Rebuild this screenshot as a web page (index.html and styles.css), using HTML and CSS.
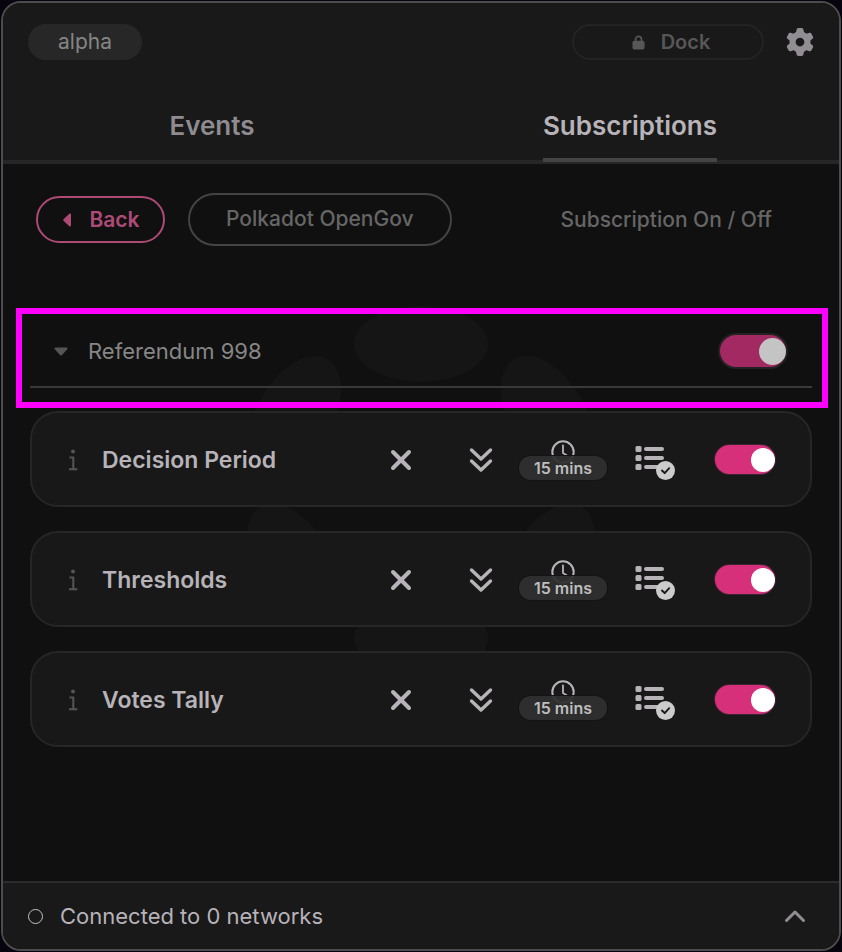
FILE: index.html
```
<!DOCTYPE html>
<html lang="en">
<head>
<meta charset="utf-8">
<title>Subscriptions</title>
<link rel="stylesheet" href="styles.css">
</head>
<body>
<svg class="sprite" aria-hidden="true">
  <symbol id="cross" viewBox="0 0 24 24"><path d="M4 4 20 20M20 4 4 20" fill="none" stroke="currentColor" stroke-width="4" stroke-linecap="round"/></symbol>
  <symbol id="chevrons" viewBox="0 0 24 26"><path d="M2.500 3 12 12 21.500 3M2.500 14 12 23 21.500 14" fill="none" stroke="currentColor" stroke-width="3.400" stroke-linecap="round" stroke-linejoin="round"/></symbol>
  <symbol id="clock" viewBox="0 0 24 24"><path d="M12 5.500V13L16 15.500" fill="none" stroke="currentColor" stroke-width="1.800" stroke-linecap="round"/><circle cx="12" cy="12" r="10.700" fill="none" stroke="currentColor" stroke-width="2"/></symbol>
  <symbol id="list" viewBox="0 -7 40 43"><g fill="currentColor"><rect x="0.500" y="1" width="6" height="6" rx="1.500"/><rect x="0.500" y="10" width="6" height="6" rx="1.500"/><rect x="0.500" y="19" width="6" height="6" rx="1.500"/><rect x="9" y="2" width="20" height="4" rx="2"/><rect x="9" y="11" width="20" height="4" rx="2"/><rect x="9" y="20" width="20" height="4" rx="2"/></g><circle cx="30.500" cy="25.500" r="9.500" fill="#cbcbcb"/><path d="M27 25.500 29.700 28.200 34.200 23.200" fill="none" stroke="#181818" stroke-width="1.900" stroke-linecap="round" stroke-linejoin="round"/></symbol>
  <symbol id="info" viewBox="0 0 10 22"><circle cx="5" cy="2.400" r="2" fill="currentColor"/><path d="M1.500 8.500H5.300V20M1 20.200H9.300" fill="none" stroke="currentColor" stroke-width="2"/></symbol>
</svg>
<div class="panel">
  <header class="header">
    <div class="topbar">
      <span class="tag">alpha</span>
      <div class="actions">
        <button class="dock" type="button"><svg class="lock" viewBox="0 0 14 16"><path d="M3.800 7V4.600a3.200 3.200 0 0 1 6.400 0V7" fill="none" stroke="currentColor" stroke-width="1.800"/><rect x="0.500" y="6" width="13" height="9.500" rx="2" fill="currentColor"/></svg>Dock</button>
        <button class="icon-button" type="button" aria-label="Settings"><svg class="gear" viewBox="0 0 512 512"><path fill="currentColor" d="M495.900 166.600c3.200 8.700 .5 18.400-6.400 24.600l-43.300 39.400c1.100 8.300 1.700 16.800 1.700 25.400s-.6 17.100-1.700 25.400l43.300 39.400c6.900 6.200 9.600 15.900 6.400 24.600c-4.400 11.900-9.700 23.300-15.800 34.300l-4.700 8.100c-6.600 11-14 21.400-22.100 31.200c-5.900 7.200-15.700 9.600-24.500 6.800l-55.700-17.700c-13.400 10.300-28.200 18.900-44 25.400l-12.500 57.100c-2 9.100-9 16.300-18.200 17.800c-13.800 2.300-28 3.500-42.500 3.500s-28.700-1.200-42.500-3.500c-9.200-1.500-16.200-8.700-18.200-17.800l-12.500-57.100c-15.800-6.500-30.600-15.100-44-25.400L83.100 425.900c-8.800 2.800-18.600 .3-24.500-6.800c-8.100-9.800-15.500-20.200-22.100-31.200l-4.700-8.100c-6.100-11-11.400-22.400-15.800-34.300c-3.200-8.700-.5-18.400 6.400-24.600l43.300-39.400C64.600 273.100 64 264.600 64 256s.6-17.100 1.700-25.400L22.400 191.200c-6.900-6.200-9.600-15.900-6.400-24.600c4.400-11.900 9.700-23.300 15.800-34.300l4.700-8.100c6.600-11 14-21.400 22.100-31.200c5.900-7.200 15.700-9.600 24.500-6.800l55.700 17.700c13.400-10.300 28.200-18.900 44-25.400l12.500-57.100c2-9.100 9-16.300 18.200-17.800C227.300 1.200 241.500 0 256 0s28.700 1.200 42.500 3.500c9.200 1.500 16.200 8.700 18.200 17.800l12.500 57.100c15.800 6.500 30.600 15.100 44 25.400l55.700-17.700c8.800-2.800 18.600-.3 24.500 6.800c8.100 9.800 15.500 20.200 22.100 31.200l4.700 8.100c6.100 11 11.400 22.400 15.800 34.300zM256 336a80 80 0 1 0 0-160 80 80 0 1 0 0 160z"/></svg></button>
      </div>
    </div>
    <nav class="tabs">
      <a class="tab" href="#events">Events</a>
      <a class="tab active" href="#subscriptions" aria-current="page">Subscriptions</a>
    </nav>
  </header>
  <main class="content">
    <svg class="watermark" viewBox="-182 -186 364 372" aria-hidden="true"><g fill="currentColor">
      <ellipse cy="-147" rx="67" ry="38"/><ellipse cy="147" rx="67" ry="38"/>
      <ellipse cx="-127" cy="-74" rx="67" ry="38" transform="rotate(-60 -127 -74)"/>
      <ellipse cx="127" cy="-74" rx="67" ry="38" transform="rotate(60 127 -74)"/>
      <ellipse cx="-127" cy="74" rx="67" ry="38" transform="rotate(60 -127 74)"/>
      <ellipse cx="127" cy="74" rx="67" ry="38" transform="rotate(-60 127 74)"/></g></svg>
    <div class="toolbar">
      <button class="back" type="button"><svg class="caret-left" viewBox="0 0 8 14"><path d="M7 1.500V12.500L1.200 7Z" fill="currentColor" stroke="currentColor" stroke-width="2" stroke-linejoin="round"/></svg>Back</button>
      <span class="category">Polkadot OpenGov</span>
      <span class="legend">Subscription On / Off</span>
    </div>
    <section class="group">
      <div class="group-head">
        <button class="group-toggle" type="button"><svg class="caret-down" viewBox="0 0 14 9"><path d="M1.500 1.500H12.500L7 7.500Z" fill="currentColor" stroke="currentColor" stroke-width="2" stroke-linejoin="round"/></svg>Referendum 998</button>
        <input class="switch large" type="checkbox" checked aria-label="Referendum 998">
      </div>
    </section>
    <ul class="cards">
      <li class="card">
        <button class="icon-button info" type="button" aria-label="About Decision Period"><svg class="i-info"><use href="#info"/></svg></button>
        <label class="name" for="decision">Decision Period</label>
        <button class="icon-button" type="button" aria-label="Remove"><svg class="i-cross"><use href="#cross"/></svg></button>
        <button class="icon-button" type="button" aria-label="Expand"><svg class="i-chevrons"><use href="#chevrons"/></svg></button>
        <button class="interval" type="button"><svg class="i-clock"><use href="#clock"/></svg><span class="badge">15 mins</span></button>
        <button class="icon-button" type="button" aria-label="Notifications"><svg class="i-list"><use href="#list"/></svg></button>
        <input class="switch" id="decision" type="checkbox" checked>
      </li>
      <li class="card">
        <button class="icon-button info" type="button" aria-label="About Thresholds"><svg class="i-info"><use href="#info"/></svg></button>
        <label class="name" for="thresholds">Thresholds</label>
        <button class="icon-button" type="button" aria-label="Remove"><svg class="i-cross"><use href="#cross"/></svg></button>
        <button class="icon-button" type="button" aria-label="Expand"><svg class="i-chevrons"><use href="#chevrons"/></svg></button>
        <button class="interval" type="button"><svg class="i-clock"><use href="#clock"/></svg><span class="badge">15 mins</span></button>
        <button class="icon-button" type="button" aria-label="Notifications"><svg class="i-list"><use href="#list"/></svg></button>
        <input class="switch" id="thresholds" type="checkbox" checked>
      </li>
      <li class="card">
        <button class="icon-button info" type="button" aria-label="About Votes Tally"><svg class="i-info"><use href="#info"/></svg></button>
        <label class="name" for="votes">Votes Tally</label>
        <button class="icon-button" type="button" aria-label="Remove"><svg class="i-cross"><use href="#cross"/></svg></button>
        <button class="icon-button" type="button" aria-label="Expand"><svg class="i-chevrons"><use href="#chevrons"/></svg></button>
        <button class="interval" type="button"><svg class="i-clock"><use href="#clock"/></svg><span class="badge">15 mins</span></button>
        <button class="icon-button" type="button" aria-label="Notifications"><svg class="i-list"><use href="#list"/></svg></button>
        <input class="switch" id="votes" type="checkbox" checked>
      </li>
    </ul>
  </main>
  <footer class="footer">
    <span class="status"></span>
    <span>Connected to 0 networks</span>
    <button class="icon-button expand" type="button" aria-label="Expand footer"><svg class="i-up" viewBox="0 0 22 14"><path d="M2.500 11.500 11 3 19.500 11.500" fill="none" stroke="currentColor" stroke-width="3" stroke-linecap="round" stroke-linejoin="round"/></svg></button>
  </footer>
</div>
</body>
</html>
```
FILE: styles.css
```
* { box-sizing: border-box; }
body {
  margin: 0;
  padding: 1px;
  min-height: 100vh;
  display: flex;
  background: #08040f;
  font: 400 22px/32px Inter, sans-serif;
  color: #b7b3b9;
}
button { margin: 0; padding: 0; border: 0; background: none; color: inherit; font: inherit; }
svg { display: block; flex: none; }
.sprite { position: absolute; width: 0; height: 0; }
.panel {
  flex: 1;
  display: flex;
  flex-direction: column;
  border: 2px solid #4c4c4c;
  border-radius: 20px;
  background: #101010;
  overflow: hidden;
}
.header { background: #191919; border-bottom: 4px solid #262626; }
.topbar { display: flex; justify-content: space-between; align-items: center; padding: 21px 25px 0; }
.tag {
  width: 114px;
  border-radius: 18px;
  background: #272727;
  color: #858585;
  font-size: 21px;
  line-height: 36px;
  text-align: center;
}
.actions { display: flex; align-items: center; gap: 22px; }
.dock {
  display: flex;
  align-items: center;
  justify-content: center;
  gap: 16px;
  width: 192px;
  height: 36px;
  padding-left: 6px;
  border: 2px solid #232323;
  border-radius: 18px;
  color: #575757;
  font-size: 20px;
  font-weight: 600;
}
.lock { width: 13px; height: 15px; }
.icon-button { display: flex; align-items: center; justify-content: center; }
.gear { width: 28px; height: 28px; color: #918d93; }
.tabs { display: grid; grid-template-columns: 1fr 1fr; justify-items: center; margin: 50px 0 -2px; }
.tab {
  padding-bottom: 16px;
  border-bottom: 4px solid transparent;
  color: #8f8b91;
  font-size: 26px;
  font-weight: 600;
  text-decoration: none;
}
.tab.active { color: #b7b3b9; border-color: #444; }

.content { position: relative; flex: 1; padding: 29px 27px; z-index: 0; }
.watermark {
  position: absolute;
  z-index: -1;
  top: 141px;
  left: 50%;
  width: 364px;
  height: 372px;
  margin-left: -182px;
  color: #151515;
}
.toolbar { display: flex; align-items: center; padding: 0 40px 0 6px; gap: 23px; font-size: 21px; }
.back {
  display: flex;
  align-items: center;
  justify-content: center;
  gap: 18px;
  width: 129px;
  height: 47px;
  padding-left: 2px;
  border: 2px solid #ad4a76;
  border-radius: 24px;
  color: #ad4a76;
  font-weight: 600;
}
.caret-left { width: 8px; height: 14px; }
.category {
  padding: 8px 36px 9px;
  border: 2px solid #444;
  border-radius: 27px;
  color: #666;
  font-weight: 500;
}
.legend { margin-left: auto; color: #666; font-weight: 500; }

.group {
  margin: 62px -16px 3px -14px;
  padding: 0 10px 14px 8px;
  border: 6px solid #f0f;
}
.group-head {
  display: flex;
  align-items: center;
  justify-content: space-between;
  height: 74px;
  padding: 2px 26px 0 24px;
  border-bottom: 2px solid #393939;
}
.group-toggle { display: flex; align-items: center; gap: 20px; color: #868686; }
.caret-down { width: 14px; height: 9px; color: #555; }
.switch {
  appearance: none;
  display: flex;
  justify-content: flex-end;
  align-items: center;
  width: 60px;
  height: 29px;
  margin: 0;
  border-radius: 16px;
  background: #d6307a;
  box-shadow: 0 0 0 1px #3d2430;
}
.switch::before { content: ""; width: 24px; height: 24px; border-radius: 50%; background: #fff; }
.switch.large { width: 66px; height: 32px; background: #a22961; box-shadow: 0 0 0 2px #222; }
.switch.large::before { width: 27px; height: 27px; background: #c4c4c4; }

.cards { display: grid; gap: 24px; margin: 0; padding: 0; list-style: none; }
.card {
  display: grid;
  grid-template-columns: 32px 1fr 80px 80px 84px 100px 80px;
  align-items: center;
  justify-items: center;
  height: 96px;
  padding: 1px 25px 0;
  border: 2px solid #262626;
  border-radius: 28px;
  background: #181818;
}
.info { color: #555; }
.name { justify-self: start; padding-left: 13px; font-size: 23px; font-weight: 600; }
.i-info { width: 10px; height: 22px; }
.i-cross { width: 24px; height: 24px; }
.i-chevrons { width: 24px; height: 26px; }
.i-list { width: 40px; height: 43px; }
.interval { display: flex; flex-direction: column; align-items: center; }
.i-clock { width: 24px; height: 24px; margin-bottom: -8px; }
.badge {
  position: relative;
  width: 88px;
  border-radius: 12px;
  background: #303030f0;
  box-shadow: 0 0 0 1px #141414;
  color: #bdbdbd;
  font-size: 16px;
  font-weight: 600;
  line-height: 24px;
}

.footer {
  display: flex;
  align-items: center;
  gap: 17px;
  height: 68px;
  padding: 0 25px;
  border-top: 2px solid #2b2b2b;
  background: #191919;
}
.status { width: 15px; height: 15px; border: 1px solid #c4c4c4; border-radius: 50%; }
.expand { margin-left: auto; padding-right: 8px; color: #918d93; }
.i-up { width: 22px; height: 14px; }
```
